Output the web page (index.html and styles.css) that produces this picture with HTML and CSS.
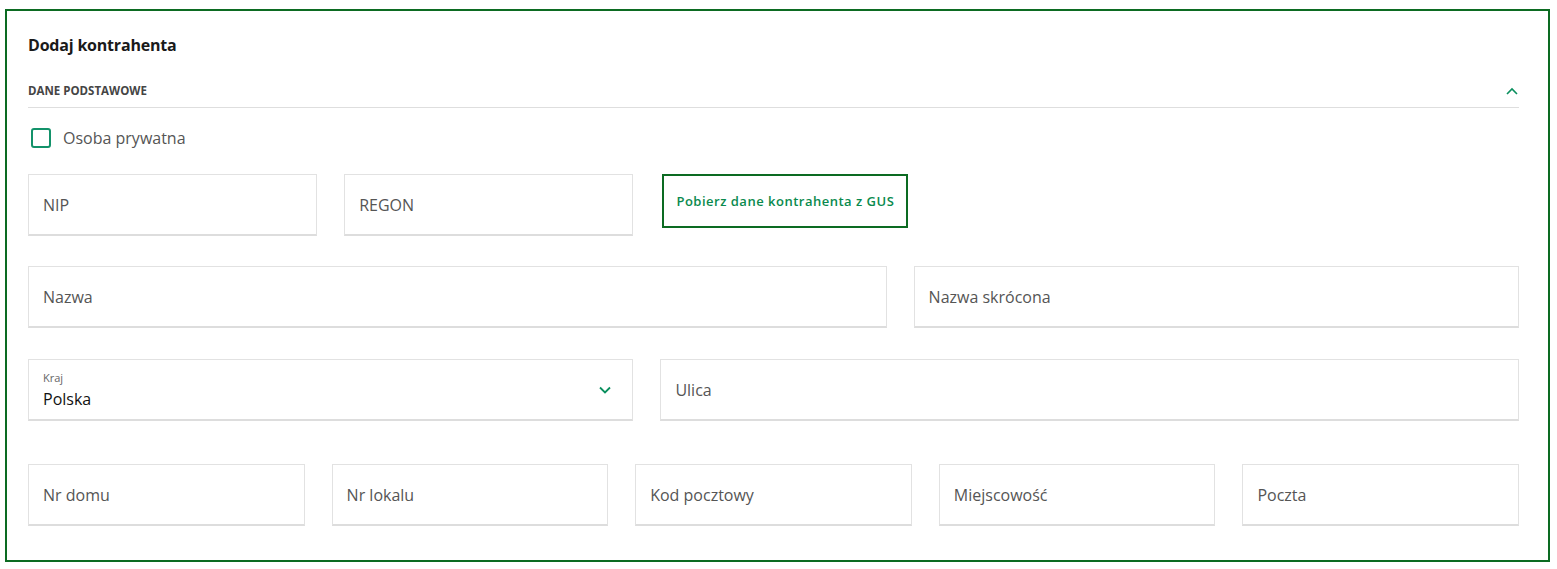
FILE: index.html
```html
<!DOCTYPE html>
<html lang="pl">
<head>
    <meta charset="UTF-8">
    <title>Dodaj kontrahenta</title>
    <link rel="stylesheet" href="styles.css">
</head>
<body>
    <div class="card">
        <h2 class="title">Dodaj kontrahenta</h2>

        <div class="section-head">
            <span>Dane podstawowe</span>
            <svg class="chev" width="12" height="8" viewBox="0 0 12 8"><path d="M1 7 L6 2 L11 7" fill="none" stroke="#0a8f5e" stroke-width="1.6"/></svg>
        </div>

        <label class="check">
            <span class="box"></span>
            Osoba prywatna
        </label>

        <div class="row row-top">
            <div class="pair">
                <div class="field">NIP</div>
                <div class="field">REGON</div>
            </div>
            <div class="gus-wrap">
                <button class="gus">Pobierz dane kontrahenta z GUS</button>
            </div>
        </div>

        <div class="row row-name">
            <div class="field">Nazwa</div>
            <div class="field">Nazwa skrócona</div>
        </div>

        <div class="row row-address">
            <div class="field select">
                <div>
                    <div class="small-label">Kraj</div>
                    <div class="value">Polska</div>
                </div>
                <svg width="12" height="8" viewBox="0 0 12 8"><path d="M1 1.5 L6 6.5 L11 1.5" fill="none" stroke="#0a8f5e" stroke-width="1.8"/></svg>
            </div>
            <div class="field">Ulica</div>
        </div>

        <div class="row row-five">
            <div class="field">Nr domu</div>
            <div class="field">Nr lokalu</div>
            <div class="field">Kod pocztowy</div>
            <div class="field">Miejscowość</div>
            <div class="field">Poczta</div>
        </div>
    </div>
</body>
</html>
```

FILE: styles.css
```css
body {
    margin: 0;
    font-family: "Open Sans", "Liberation Sans", sans-serif;
    color: #555;
    background: #fff;
}

.card {
    margin: 9px 7px 8px 5px;
    border: 2px solid #0c6b22;
    padding: 22px 29px 34px 21px;
}

.title {
    margin: 0;
    font-size: 16px;
    font-weight: 700;
    color: #1a1a1a;
    line-height: 24px;
    letter-spacing: -0.2px;
}

.section-head {
    margin-top: 26px;
    display: flex;
    justify-content: space-between;
    align-items: center;
    padding: 0 0 8px 0;
    border-bottom: 1px solid #dedede;
}
.section-head span {
    font-size: 11.5px;
    font-weight: 700;
    text-transform: uppercase;
    color: #454545;
    line-height: 16px;
}
.chev {
    margin-right: 1px;
}

.check {
    display: flex;
    align-items: center;
    gap: 12px;
    margin-top: 19px;
    font-size: 16px;
    line-height: 22px;
    color: #555;
    margin-left: 3px;
}
.check .box {
    width: 16px;
    height: 16px;
    border: 2px solid #13926a;
    border-radius: 3px;
}

.row {
    display: grid;
    gap: 27px;
}
.row-top {
    grid-template-columns: 605fr 858fr;
    margin-top: 25px;
}
.pair {
    display: grid;
    grid-template-columns: 1fr 1fr;
    gap: 27px;
}
.gus-wrap {
    display: flex;
    align-items: flex-start;
    padding-left: 2px;
}
.gus {
    height: 54px;
    padding: 0 12px;
    background: #fff;
    border: 2px solid #0c6b22;
    color: #0a8a4e;
    font-family: "Open Sans", "Liberation Sans", sans-serif;
    font-size: 13px;
    font-weight: 600;
    letter-spacing: 0.5px;
    cursor: pointer;
}

.row-name {
    grid-template-columns: 858fr 605fr;
    margin-top: 30px;
}
.row-address {
    grid-template-columns: 605fr 858fr;
    margin-top: 31px;
}
.row-five {
    grid-template-columns: repeat(5, 1fr);
    margin-top: 43px;
}

.field {
    box-sizing: border-box;
    height: 62px;
    border: 1px solid #e2e2e2;
    border-bottom: 2px solid #dddddd;
    padding: 0 14px;
    display: flex;
    align-items: center;
    font-size: 16px;
    line-height: 22px;
    color: #555;
}
.select {
    justify-content: space-between;
    padding-right: 21px;
}
.small-label {
    font-size: 11px;
    color: #666;
    line-height: 15px;
    margin-top: 0;
}
.value {
    font-size: 16px;
    color: #111;
    line-height: 22px;
    margin-top: 3px;
}
```
